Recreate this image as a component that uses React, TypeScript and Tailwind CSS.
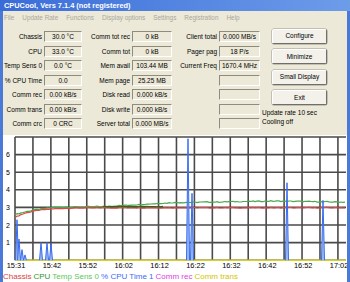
import React from 'react';

const col1 = [
    ['Chassis', '30.0 °C'],
    ['CPU', '33.0 °C'],
    ['Temp Sens 0', '0.0 °C'],
    ['% CPU Time', '0.0'],
    ['Comm rec', '0.00 kB/s'],
    ['Comm trans', '0.00 kB/s'],
    ['Comm crc', '0 CRC'],
];

const col2 = [
    ['Comm tot rec', '0 kB'],
    ['Comm tot', '0 kB'],
    ['Mem avail', '103.44 MB'],
    ['Mem page', '25.25 MB'],
    ['Disk read', '0.000 kB/s'],
    ['Disk write', '0.000 kB/s'],
    ['Server total', '0.000 MB/s'],
];

const col3 = [
    ['Client total', '0.000 MB/s'],
    ['Pager pag', '18 P/s'],
    ['Current Freq', '1670.4 MHz'],
    ['', ''],
    ['', ''],
    ['', ''],
    ['', ''],
];

const menu = ['File', 'Update Rate', 'Functions', 'Display options', 'Settings', 'Registration', 'Help'];
const buttons = ['Configure', 'Minimize', 'Small Display', 'Exit'];
const times = ['15:31', '15:42', '15:52', '16:02', '16:12', '16:22', '16:32', '16:42', '16:52', '17:02'];

// chart geometry (svg coords)
const X0 = 12;
const XSTEP = 17.94;
const XEND = 343;
const Y0 = 125.2;
const YSTEP = 17.6;
const yv = (v: number) => Y0 - YSTEP * v;

function noise(i: number) {
    const s = Math.sin(i * 12.9898) * 43758.5453;
    return s - Math.floor(s) - 0.5;
}

function line(fn: (x: number) => number, from: number, to: number, amp: number, step = 2) {
    const pts: string[] = [];
    let i = 0;
    for (let x = from; x <= to; x += step) {
        pts.push(`${x.toFixed(1)},${yv(fn(x) + noise(i++) * amp).toFixed(1)}`);
    }
    return pts.join(' ');
}

function interp(x: number, pts: [number, number][]) {
    for (let i = 1; i < pts.length; i++) {
        if (x <= pts[i][0]) {
            const [x1, y1] = pts[i - 1];
            const [x2, y2] = pts[i];
            return y1 + ((x - x1) / (x2 - x1)) * (y2 - y1);
        }
    }
    return pts[pts.length - 1][1];
}

const redFn = (x: number) => 2.98 - 0.55 * Math.exp(-(x - X0) / 18);
const greenFn = (x: number) =>
    interp(x, [
        [12, 2.6],
        [30, 2.85],
        [50, 3.0],
        [100, 3.05],
        [170, 3.27],
        [270, 3.36],
        [343, 3.3],
    ]);

// blue spikes: [x, peak value]
const spikes: [number, number][] = [
    [14, 2.3],
    [16, 1.2],
    [19, 0.6],
    [22, 0.3],
    [38, 1.0],
    [44, 1.0],
    [48, 0.95],
    [185, 6.9],
    [189, 3.8],
    [284, 4.4],
    [320, 3.4],
];

function Chart() {
    return (
        <svg width="344" height="136" className="block">
            {Array.from({ length: 19 }, (_, i) => (
                <line key={'v' + i} x1={X0 + XSTEP * i} y1={2} x2={X0 + XSTEP * i} y2={Y0} stroke="#4a4a4a" strokeWidth="1.6" />
            ))}
            {Array.from({ length: 8 }, (_, j) => (
                <line key={'h' + j} x1={X0} y1={2 + YSTEP * j} x2={XEND} y2={2 + YSTEP * j} stroke="#4a4a4a" strokeWidth="1.6" />
            ))}
            <polyline points={line(greenFn, X0, XEND, 0.05)} fill="none" stroke="#4aa84a" strokeWidth="1.2" />
            <polyline points={line(() => 3.05, 100, 160, 0.03)} fill="none" stroke="#1f6e1f" strokeWidth="1.2" />
            <polyline points={line(redFn, X0, XEND, 0.04)} fill="none" stroke="#e04848" strokeWidth="1.2" />
            <line x1={X0} y1={Y0} x2={XEND} y2={Y0} stroke="#d4d02c" strokeWidth="1.6" />
            {spikes.map(([x, v], i) => (
                <polyline
                    key={'s' + i}
                    points={`${x - 1.5},${Y0} ${x},${yv(v)} ${x + 1.5},${Y0}`}
                    fill="#9cbcf4"
                    stroke="#3a6cf0"
                    strokeWidth="1"
                />
            ))}
            {[1, 2, 3, 4, 5, 6].map((v) => (
                <text key={'y' + v} x={5} y={yv(v) + 2.5} fontSize="7" textAnchor="middle" fill="#000">
                    {v}
                </text>
            ))}
            {times.map((t, i) => (
                <text key={t} x={13 + 35.9 * i} y={133} fontSize="7.4" textAnchor="middle" fill="#000">
                    {t}
                </text>
            ))}
        </svg>
    );
}

function Column({ rows, labelW, boxW }: { rows: string[][]; labelW: string; boxW: string }) {
    return (
        <div className="flex flex-col gap-[3.5px] pt-[7px]">
            {rows.map(([label, value], i) => (
                <div key={i} className="flex items-center h-[11px]">
                    <div className={`${labelW} text-right pr-[2px] leading-[11px] whitespace-nowrap`}>{label}</div>
                    <div
                        className={`${boxW} h-[11px] border border-t-[#8f8c7e] border-l-[#8f8c7e] border-b-white border-r-white text-center leading-[9px] whitespace-nowrap overflow-hidden`}
                    >
                        {value}
                    </div>
                </div>
            ))}
        </div>
    );
}

export default function App() {
    return (
        <div className="w-[350px] h-[282px] overflow-hidden flex flex-col bg-[#4b79d8] font-['Liberation_Sans',Arial,sans-serif] text-black">
            <div className="h-[11px] shrink-0 bg-gradient-to-r from-[#3a6cd8] to-[#6d9ce9] pl-[4px] text-white font-bold text-[7.4px] leading-[11px] whitespace-nowrap">
                CPUCool, Vers 7.1.4 (not registered)
            </div>
            <div className="flex-1 mx-[3px] flex flex-col bg-[#ece9d8] min-h-0">
                <div className="h-[13px] shrink-0 flex gap-[8px] pl-[1px] text-[6.4px] leading-[13px] text-[#aaa79c] whitespace-nowrap">
                    {menu.map((m) => (
                        <span key={m}>{m}</span>
                    ))}
                </div>
                <div className="h-[111px] shrink-0 flex text-[6.5px]">
                    <Column rows={col1} labelW="w-[41px]" boxW="w-[38px]" />
                    <Column rows={col2} labelW="w-[50px]" boxW="w-[40px]" />
                    <Column rows={col3} labelW="w-[47px]" boxW="w-[41px]" />
                    <div className="flex flex-col pt-[4.5px]">
                        <div className="flex flex-col gap-[5.5px] pl-[12px]">
                            {buttons.map((b) => (
                                <div
                                    key={b}
                                    className="w-[55px] h-[15px] flex items-center justify-center rounded-[2px] border border-t-white border-l-white border-b-[#6f6e68] border-r-[#6f6e68] bg-[#f3f1ea] shadow-[0_0_0_0.5px_#9a988e]"
                                >
                                    {b}
                                </div>
                            ))}
                        </div>
                        <div className="mt-[3px] pl-[2px] leading-[9px] whitespace-nowrap">
                            <div>Update rate 10 sec</div>
                            <div>Cooling off</div>
                        </div>
                    </div>
                </div>
                <div className="flex-1 bg-white flex flex-col min-h-0">
                    <Chart />
                    <div className="flex gap-[2px] text-[8px] leading-[11px] whitespace-nowrap">
                        <span className="text-[#e03c3c]">Chassis</span>
                        <span className="text-[#2e962e]">CPU</span>
                        <span className="text-[#5cc85c]">Temp Sens 0</span>
                        <span className="text-[#3f6bf5]">% CPU Time 1</span>
                        <span className="text-[#e040e0]">Comm rec</span>
                        <span className="text-[#d4c400]">Comm trans</span>
                    </div>
                </div>
            </div>
        </div>
    );
}
